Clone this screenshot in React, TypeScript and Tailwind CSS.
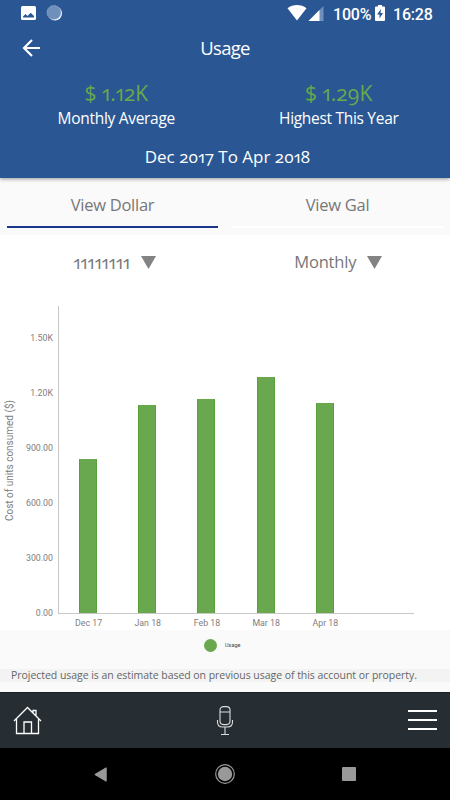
import type { ReactNode } from 'react';

const bars = [
  { label: 'Dec 17', height: 154 },
  { label: 'Jan 18', height: 208 },
  { label: 'Feb 18', height: 214.5 },
  { label: 'Mar 18', height: 236 },
  { label: 'Apr 18', height: 210 },
];

const ticks = ['1.50K', '1.20K', '900.00', '600.00', '300.00', '0.00'];

function StatusBar() {
  return (
    <div className="flex h-[26px] items-center pl-5 pr-[18px] font-[Roboto] text-base font-medium text-white [font-variant-numeric:normal]">
      <svg className="h-[26px] w-12" viewBox="0 0 48 26" aria-hidden="true">
        <rect x="1" y="6" width="15" height="14" rx="1.5" fill="#fff" />
        <path d="M3 17.5v-1l2.500-2.500 2 2 3.200-3.300L14 16v1.500z" fill="#2a5793" />
        <circle cx="35" cy="13.500" r="7" fill="#fff" />
        <circle cx="34" cy="12.500" r="7" fill="#6f8fbd" stroke="#a4b7d4" strokeWidth="1" strokeDasharray="1 1" />
      </svg>
      <div className="flex-1" />
      <svg className="mr-2 h-[26px] w-[38px]" viewBox="0 0 38 26" aria-hidden="true">
        <path d="M0.500 8.200C6 3.900 14 3.900 19.500 8.200L10 20.500z" fill="#fff" />
        <path d="M36.500 6v15h-15z" fill="#6f8fbd" />
        <path d="M32.500 10v11h-11z" fill="#fff" />
      </svg>
      <span className="w-[38px] whitespace-nowrap pt-[3px] tracking-[-0.2px]">100%</span>
      <svg className="ml-[4px] mr-[8px] h-[26px] w-[10px]" viewBox="0 0 10 26" aria-hidden="true">
        <path d="M3 5h4v1.500h2q1 0 1 1V20q0 1-1 1H1q-1 0-1-1V7.500q0-1 1-1h2z" fill="#fff" />
        <path d="M6 9L2 14.500h2.500V18.500L8 13H5.500z" fill="#2a5793" />
      </svg>
      <span className="w-[39px] whitespace-nowrap pt-[3px] tracking-[-0.2px]">16:28</span>
    </div>
  );
}

function Stat({ value, label }: { value: string; label: string }) {
  return (
    <div className="flex flex-1 flex-col items-center">
      <span className="h-[26px] text-[21px] leading-[26px] text-[#68a94b]">{value}</span>
      <span className="h-[24px] text-[15.5px] leading-[24px] tracking-[-0.3px] text-white">{label}</span>
    </div>
  );
}

function Tab({ active, children }: { active?: boolean; children: ReactNode }) {
  return (
    <div className="flex flex-1 flex-col px-[7px]">
      <span className="flex h-12 items-center justify-center pt-1.5">{children}</span>
      <div className={active ? 'h-[2px] bg-[#1b378b]' : 'h-[2px] bg-white'} />
    </div>
  );
}

function Picker({ children }: { children: ReactNode }) {
  return (
    <div className="flex items-center gap-[11px]">
      {children}
      <svg className="h-[13px] w-[15px]" viewBox="0 0 15 13" aria-hidden="true">
        <path d="M0 0h15L7.500 13z" fill="#838383" />
      </svg>
    </div>
  );
}

function UsageChart() {
  return (
    <div className="flex h-[340px] bg-white pt-4 font-[Roboto] text-[8.8px] text-[#808080] [font-variant-numeric:normal]">
      <div className="flex w-[20px] justify-center pt-[93px]">
        <span className="h-[122px] rotate-180 whitespace-nowrap text-[10px] leading-5 [writing-mode:vertical-rl]">
          Cost of units consumed ($)
        </span>
      </div>
      <div className="flex w-[33px] flex-col items-end pt-[5px]">
        {ticks.map((tick) => (
          <span key={tick} className="flex h-[55px] shrink-0 items-center">{tick}</span>
        ))}
      </div>
      <div className="ml-[5px] flex w-[356px] flex-col">
        <div className="flex h-[308px] items-end border-b border-l border-[#c8c8c8]">
          {bars.map((bar) => (
            <div key={bar.label} className="flex w-[59.200px] justify-center pr-px">
              <div
                className="w-[18px] border-x border-[#58a038] bg-[#6aa84f]"
                style={{ height: bar.height }}
              />
            </div>
          ))}
        </div>
        <div className="flex pl-px pt-[3px] leading-3">
          {bars.map((bar) => (
            <span key={bar.label} className="w-[59.200px] text-center">{bar.label}</span>
          ))}
        </div>
      </div>
    </div>
  );
}

function BottomNav() {
  return (
    <nav className="flex h-14 items-center justify-between border-t border-[#14212a] bg-[#262d33] px-[13px]">
      <svg className="h-[30px] w-[29px]" viewBox="0 0 29 30" fill="none" stroke="#fff" strokeWidth="1.300" aria-hidden="true">
        <path d="M1 15L14.500 1.500L28 15M3.500 13v14.500h22V13M11 27.500V16h7.500v11.500M20 7V4.500h3V10" />
      </svg>
      <svg className="h-[30px] w-[18px]" viewBox="0 0 18 30" fill="none" stroke="#ddd" strokeWidth="1.100" aria-hidden="true">
        <rect x="4" y="0.600" width="10" height="18" rx="3.500" />
        <path d="M4 6h10M1.500 14v2q0 5 5 5h5q5 0 5-5v-2M9 21v7.500M5 28.500h8" />
      </svg>
      <div className="-mt-px flex w-[29px] flex-col gap-[7.500px]">
        <div className="h-[1.500px] bg-white" />
        <div className="h-[1.500px] bg-white" />
        <div className="h-[1.500px] bg-white" />
      </div>
    </nav>
  );
}

function SystemNav() {
  return (
    <div className="flex h-[52px] items-center justify-between bg-black pl-[94px] pr-[94px]">
      <svg className="h-[15px] w-[13px]" viewBox="0 0 13 15" aria-hidden="true">
        <path d="M12.200 0.800v13.400L0.800 7.500z" fill="#999" stroke="#999" strokeWidth="1" strokeLinejoin="round" />
      </svg>
      <svg className="h-5 w-5" viewBox="0 0 20 20" aria-hidden="true">
        <circle cx="10" cy="10" r="9.300" fill="none" stroke="#999" strokeWidth="1.200" />
        <circle cx="10" cy="10" r="7.200" fill="#999" />
      </svg>
      <div className="h-[14px] w-[14px] rounded-[1px] bg-[#999]" />
    </div>
  );
}

export default function App() {
  return (
    <div className="flex h-[800px] w-[450px] flex-col overflow-hidden bg-[#fafafa] font-['Open_Sans','Noto_Sans',sans-serif] [font-variant-numeric:oldstyle-nums_proportional-nums]">
      <header className="relative h-[178px] bg-[#2a5793] shadow-[0_1px_4px_rgba(0,0,0,0.4)]">
        <StatusBar />
        <div className="flex h-[44px] items-center pl-[22px] pr-[40px] text-white">
          <svg className="h-[18px] w-[18px]" viewBox="0 0 18 18" fill="none" stroke="#fff" strokeWidth="2.200" aria-hidden="true">
            <path d="M18 9H2M10 1L2 9L10 17" />
          </svg>
          <h1 className="flex-1 text-center text-[18.5px] tracking-[-0.7px]">Usage</h1>
        </div>
        <div className="flex pl-[5px] pt-[10px]">
          <Stat value="$ 1.12K" label="Monthly Average" />
          <Stat value="$ 1.29K" label="Highest This Year" />
        </div>
        <p className="pl-[5px] pt-[15px] text-center text-[17px] leading-6 text-white">Dec 2017 To Apr 2018</p>
      </header>

      <div className="flex h-[57px] text-[16.5px] tracking-[-0.25px] text-[#777]">
        <Tab active>View Dollar</Tab>
        <Tab>View Gal</Tab>
      </div>

      <div className="flex h-[55px] items-center bg-white pl-[3px] text-[#777]">
        <div className="flex flex-1 justify-center">
          <Picker><span className="-mt-px text-lg">11111111</span></Picker>
        </div>
        <div className="flex flex-1 justify-center">
          <Picker><span className="text-[16.5px] tracking-[-0.2px]">Monthly</span></Picker>
        </div>
      </div>

      <UsageChart />

      <div className="flex h-[39px] items-center pb-2 pl-[204px] font-[Roboto] text-[5.500px] text-[#444]">
        <div className="mr-2 h-[13px] w-[13px] rounded-full bg-[#6aa84f]" />
        Usage
      </div>
      <p className="h-[13px] whitespace-nowrap bg-[#f3f3f3] pl-[11px] text-[10.5px] leading-[13px] tracking-[-0.04px] text-[#666]">
        Projected usage is an estimate based on previous usage of this account or property.
      </p>
      <div className="h-[10px]" />
      <BottomNav />
      <SystemNav />
    </div>
  );
}
